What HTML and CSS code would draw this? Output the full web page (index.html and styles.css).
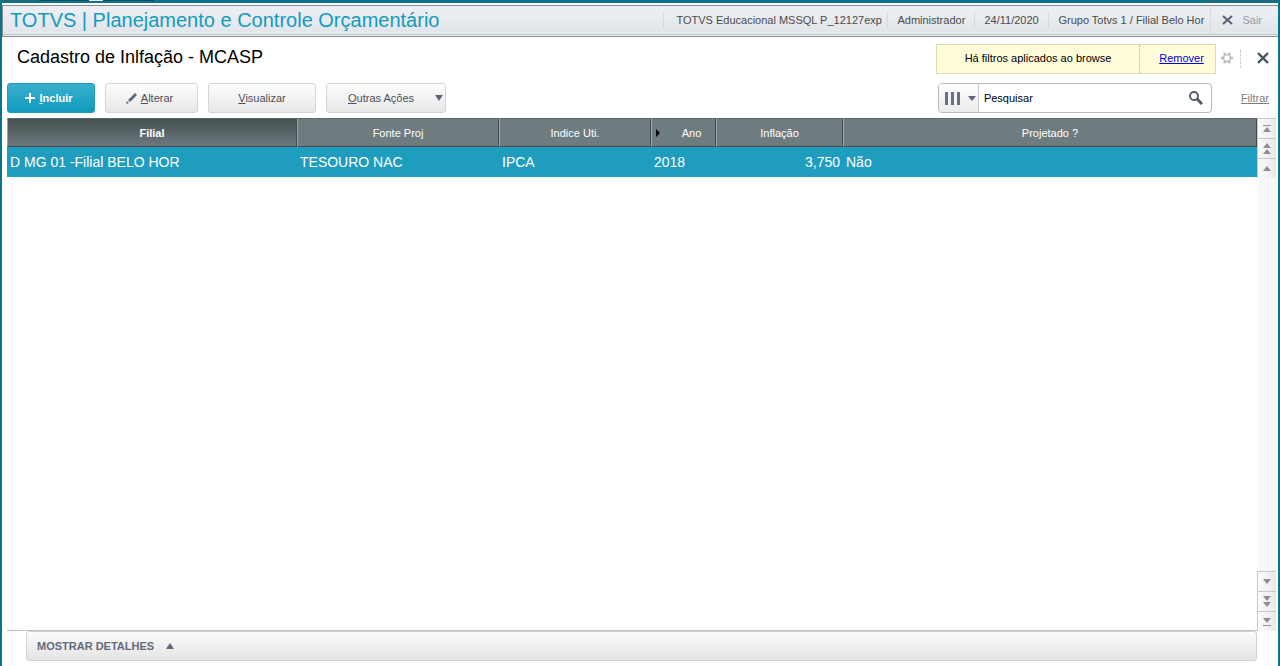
FILE: index.html
```html
<!DOCTYPE html>
<html lang="pt-BR">
<head>
    <meta charset="UTF-8">
    <meta name="viewport" content="width=device-width, initial-scale=1.0">
    <title>TOTVS | Planejamento e Controle Orçamentário</title>
    <link rel="stylesheet" href="styles.css">
</head>
<body>

<div class="edge"></div>
<header class="topbar">
    <h1>TOTVS | Planejamento e Controle Orçamentário</h1>
    <ul class="session">
        <li class="env">TOTVS Educacional MSSQL P_12127exp</li>
        <li class="user">Administrador</li>
        <li class="date">24/11/2020</li>
        <li class="branch">Grupo Totvs 1 / Filial Belo Hor</li>
    </ul>
    <button type="button" class="exit">
        <svg width="11" height="10" viewBox="0 0 11 10"><path d="M1 1l9 8M10 1l-9 8" stroke="#5b6270" stroke-width="2"/></svg>
        Sair
    </button>
</header>

<main>
    <div class="title-row">
        <h2>Cadastro de Inlfação - MCASP</h2>
        <div class="notice">
            <span>Há filtros aplicados ao browse</span>
            <a href="#">Remover</a>
        </div>
        <button type="button" class="icon-btn gear" aria-label="Configurar">
            <svg width="12" height="12" viewBox="0 0 12 12" fill="none" stroke="#bdbdbd">
                <circle cx="6" cy="6" r="3.5" stroke-width="1.6"/>
                <path d="M9.7 6H12M7.8 9.2L9 11.2M4.2 9.2L3 11.2M2.3 6H0M4.2 2.8L3 .8M7.8 2.8L9 .8" stroke-width="2.4"/>
            </svg>
        </button>
        <button type="button" class="icon-btn close" aria-label="Fechar">
            <svg width="12" height="12" viewBox="0 0 12 12"><path d="M1 1l10 10M11 1L1 11" stroke="#465066" stroke-width="2.4"/></svg>
        </button>
    </div>

    <div class="toolbar">
        <button type="button" class="btn primary">
            <svg width="10" height="10" viewBox="0 0 10 10"><path d="M5 0v10M0 5h10" stroke="#fff" stroke-width="2"/></svg>
            <span><u>I</u>ncluir</span>
        </button>
        <button type="button" class="btn edit">
            <svg width="11" height="11" viewBox="0 0 11 11" fill="#5f6677"><path d="M9 0l2 2-7 7-2-2zM1 8l2 2-3 1z"/></svg>
            <span><u>A</u>lterar</span>
        </button>
        <button type="button" class="btn view"><span><u>V</u>isualizar</span></button>
        <button type="button" class="btn more">
            <span><u>O</u>utras Ações</span>
            <svg width="8" height="6" viewBox="0 0 8 6"><path d="M0 0h8L4 6z" fill="#606678"/></svg>
        </button>

        <div class="search">
            <button type="button" class="columns" aria-label="Colunas">
                <svg width="15" height="13" viewBox="0 0 15 13" fill="#687086"><path d="M0 0h3v13H0zM6 0h3v13H6zM12 0h3v13h-3z"/></svg>
                <svg width="8" height="5" viewBox="0 0 8 5"><path d="M0 0h8L4 5z" fill="#606678"/></svg>
            </button>
            <input type="text" value="Pesquisar" aria-label="Pesquisar">
            <button type="button" class="lookup" aria-label="Buscar">
                <svg width="14" height="14" viewBox="0 0 14 14" fill="none" stroke="#4d566b"><circle cx="5" cy="5" r="4" stroke-width="1.8"/><path d="M8 8l5 5" stroke-width="2.8"/></svg>
            </button>
        </div>
        <a href="#" class="filter">Filtrar</a>
    </div>

    <div class="browse">
        <div class="grid">
            <table>
                <colgroup>
                    <col class="c-filial">
                    <col class="c-fonte">
                    <col class="c-indice">
                    <col class="c-ano">
                    <col class="c-inflacao">
                    <col>
                </colgroup>
                <thead>
                    <tr>
                        <th class="sorted">Filial</th>
                        <th>Fonte Proj</th>
                        <th>Indice Uti.</th>
                        <th class="marked">Ano</th>
                        <th>Inflação</th>
                        <th>Projetado ?</th>
                    </tr>
                </thead>
                <tbody>
                    <tr>
                        <td>D MG 01 -Filial BELO HOR</td>
                        <td>TESOURO NAC</td>
                        <td>IPCA</td>
                        <td>2018</td>
                        <td class="num">3,750</td>
                        <td>Não</td>
                    </tr>
                </tbody>
            </table>
        </div>
        <div class="scroller">
            <button type="button" aria-label="Primeiro">
                <svg width="8" height="8" viewBox="0 0 8 8" fill="#8f8f8f"><path d="M0 0h8v1H0zM4 2l4 5H0z"/></svg>
            </button>
            <button type="button" aria-label="Página anterior">
                <svg width="8" height="12" viewBox="0 0 8 12" fill="#8f8f8f"><path d="M4 0l4 5H0zM4 6l4 5H0z"/></svg>
            </button>
            <button type="button" aria-label="Anterior">
                <svg width="8" height="5" viewBox="0 0 8 5" fill="#8f8f8f"><path d="M4 0l4 5H0z"/></svg>
            </button>
            <div class="track"></div>
            <button type="button" aria-label="Próximo">
                <svg width="8" height="5" viewBox="0 0 8 5" fill="#8f8f8f"><path d="M0 0h8L4 5z"/></svg>
            </button>
            <button type="button" aria-label="Próxima página">
                <svg width="8" height="12" viewBox="0 0 8 12" fill="#8f8f8f"><path d="M0 0h8L4 5zM0 6h8l-4 5z"/></svg>
            </button>
            <button type="button" aria-label="Último">
                <svg width="8" height="8" viewBox="0 0 8 8" fill="#8f8f8f"><path d="M0 0h8L4 5zM0 7h8v1H0z"/></svg>
            </button>
        </div>
    </div>

    <button type="button" class="details">
        MOSTRAR DETALHES
        <svg width="8" height="6" viewBox="0 0 8 6"><path d="M4 0l4 6H0z" fill="#5f6677"/></svg>
    </button>
</main>

</body>
</html>
```
FILE: styles.css
```css
* {
    box-sizing: border-box;
}
body {
    display: flex;
    flex-direction: column;
    min-height: 100vh;
    margin: 0;
    border: solid #0b728e;
    border-width: 0 2px;
    background: #fff;
    font-family: "Liberation Sans", Arial, sans-serif;
    font-size: 11px;
    color: #000;
}
h1, h2, ul {
    margin: 0;
    padding: 0;
    font-weight: normal;
}
button, input {
    margin: 0;
    padding: 0;
    border: 0;
    background: none;
    font: inherit;
    color: inherit;
}
svg {
    display: block;
    flex: none;
}

/* borda da janela */
.edge {
    height: 3px;
    margin-bottom: 2px;
    background:
        linear-gradient(to right, #2f6470 37px, #0a4a5c 37px, #0a4a5c 87px, #f4f4f4 87px, #f4f4f4 101px, #0a4a5c 101px, #0a4a5c 152px, transparent 152px) 0 0 / 100% 1px no-repeat,
        linear-gradient(#2f6470, #2f6470) right top / 73px 1px no-repeat,
        #0b728e;
}

/* barra superior */
.topbar {
    display: flex;
    align-items: center;
    height: 32px;
    padding-bottom: 2px;
    border: 1px solid #8b8b91;
    border-right: 0;
    background: linear-gradient(#edeff3, #e0e5ea);
    box-shadow: inset 0 -1px #e8eef0, inset 0 -2px #bccccb;
    color: #4a4a4a;
}
.topbar h1 {
    flex: 1;
    padding-left: 7px;
    font-size: 20px;
    line-height: 28px;
    color: #129bc0;
}
.session {
    display: flex;
    list-style: none;
}
.session li {
    padding-left: 9px;
    border-left: 1px solid #d6dad9;
    line-height: 18px;
    white-space: nowrap;
}
.session .env {
    width: 224px;
    padding-left: 12px;
}
.session .user {
    width: 87px;
}
.session .date {
    width: 74px;
}
.session .branch {
    width: 162px;
}
.exit {
    display: flex;
    align-items: center;
    gap: 9px;
    height: 28px;
    padding: 0 16px 0 11px;
    border-left: 1px solid #d6dad9;
    color: #9599a3;
}

/* titulo e aviso de filtro */
.title-row {
    display: flex;
    align-items: center;
    padding: 7px 9px 0 15px;
}
.title-row h2 {
    flex: 1;
    padding-bottom: 4px;
    font-size: 18px;
    line-height: 24px;
}
.notice {
    display: flex;
    width: 280px;
    height: 30px;
    border: 1px solid #dcdcae;
    background: #fffcda;
    line-height: 26px;
    text-align: center;
}
.notice span {
    flex: 1;
}
.notice a {
    width: 76px;
    padding-left: 8px;
    border-left: 1px dotted #b5b5b5;
    color: #0000ee;
}
.icon-btn {
    display: flex;
    align-items: center;
    height: 18px;
    padding-bottom: 2px;
}
.gear {
    width: 25px;
    padding-left: 5px;
    border-right: 1px dotted #b5b5b5;
}
.close {
    padding-left: 16px;
}
main {
    flex: 1;
    display: flex;
    flex-direction: column;
    padding-bottom: 5px;
}

/* botoes */
.toolbar {
    display: flex;
    align-items: center;
    padding: 9px 9px 5px 5px;
}
.btn {
    display: flex;
    align-items: center;
    justify-content: center;
    gap: 4px;
    height: 30px;
    margin-right: 10px;
    border: 1px solid #d5d5d5;
    border-radius: 3px;
    background: linear-gradient(#fdfdfd, #e7e7e7);
    color: #4c505c;
}
.primary {
    width: 88px;
    padding-right: 4px;
    border-color: #1c9abb;
    background: linear-gradient(#3aafcd, #109abd);
    color: #fff;
    font-weight: bold;
}
.edit {
    width: 93px;
    padding-right: 4px;
}
.view {
    width: 108px;
}
.more {
    width: 120px;
    justify-content: space-between;
    padding: 0 2px 0 21px;
}
.search {
    display: flex;
    width: 274px;
    height: 30px;
    margin-left: auto;
    border: 1px solid #b9b9b9;
    border-radius: 4px;
    overflow: hidden;
}
.columns {
    display: flex;
    align-items: center;
    gap: 8px;
    width: 40px;
    padding-left: 6px;
    border-right: 1px solid #c8c8c8;
    background: linear-gradient(#fdfdfd, #ececec);
}
.search input {
    flex: 1;
    min-width: 0;
    padding-left: 5px;
}
.lookup {
    width: 22px;
}
.filter {
    margin-left: 29px;
    color: #7d7d7d;
}

/* browse */
.browse {
    flex: 1;
    display: flex;
    padding: 0 2px 0 5px;
}
.grid {
    flex: 1;
    border-bottom: 1px solid #bcc2bf;
}
table {
    width: 100%;
    table-layout: fixed;
    border-spacing: 0;
}
.c-filial {
    width: 290px;
}
.c-fonte {
    width: 202px;
}
.c-indice {
    width: 152px;
}
.c-ano {
    width: 65px;
}
.c-inflacao {
    width: 127px;
}
th {
    height: 29px;
    padding: 0;
    border: 1px solid #454b4d;
    border-top-color: #5b6668;
    border-left-color: #9aa5a7;
    background: #6e7c80;
    color: #fff;
    font-weight: normal;
}
th.sorted {
    background: linear-gradient(#465052, #6c797c);
    font-weight: bold;
}
th.marked {
    padding-left: 16px;
    background: #6e7c80 url("data:image/svg+xml,%3Csvg xmlns='http://www.w3.org/2000/svg' width='4' height='8'%3E%3Cpath d='M0 0l4 4-4 4z'/%3E%3C/svg%3E") no-repeat 4px 10px;
}
td {
    height: 30px;
    padding: 0 3px;
    background: #1e9dbf;
    color: #fff;
    font-size: 14px;
}
.num {
    text-align: right;
}
.scroller {
    display: flex;
    flex-direction: column;
    width: 19px;
}
.scroller button {
    display: flex;
    align-items: center;
    justify-content: center;
    height: 20px;
    border: 1px solid #c9c9c9;
    border-width: 1px 0 0 1px;
    background: linear-gradient(to right, #fbfbfb, #e9eaec);
}
.track {
    flex: 1;
    background: #f8f8fa;
}

/* rodape */
.details {
    display: flex;
    align-items: center;
    gap: 12px;
    height: 30px;
    margin: 0 21px 0 24px;
    padding-left: 10px;
    border: 1px solid #d0d0d0;
    border-radius: 3px;
    background: linear-gradient(#fbfbfb, #e4e4e4);
    color: #646b7c;
    font-size: 11px;
    font-weight: bold;
}
```
